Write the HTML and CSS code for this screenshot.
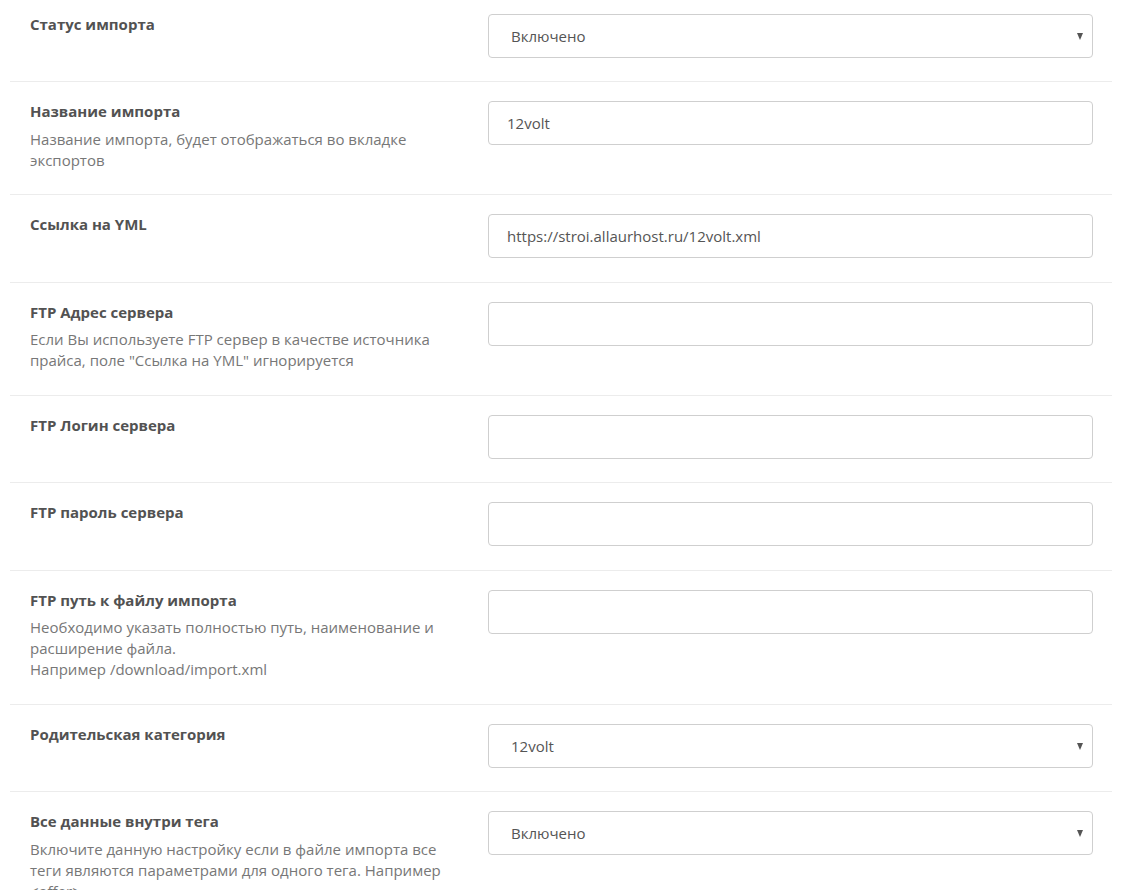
FILE: index.html
```html
<!DOCTYPE html>
<html lang="ru">
<head>
<meta charset="utf-8">
<title>Импорт</title>
<link rel="stylesheet" href="styles.css">
</head>
<body>
<div class="form">
  <div class="row">
    <div class="info"><div class="label">Статус импорта</div></div>
    <div class="control select-wrap"><select class="field"><option>Включено</option></select></div>
  </div>
  <div class="row">
    <div class="info"><div class="label">Название импорта</div><div class="desc">Название импорта, будет отображаться во вкладке экспортов</div></div>
    <div class="control"><input class="field" type="text" value="12volt"></div>
  </div>
  <div class="row">
    <div class="info"><div class="label">Ссылка на YML</div></div>
    <div class="control"><input class="field" type="text" value="https://stroi.allaurhost.ru/12volt.xml"></div>
  </div>
  <div class="row">
    <div class="info"><div class="label">FTP Адрес сервера</div><div class="desc">Если Вы используете FTP сервер в качестве источника прайса, поле "Ссылка на YML" игнорируется</div></div>
    <div class="control"><input class="field" type="text" value=""></div>
  </div>
  <div class="row">
    <div class="info"><div class="label">FTP Логин сервера</div></div>
    <div class="control"><input class="field" type="text" value=""></div>
  </div>
  <div class="row">
    <div class="info"><div class="label">FTP пароль сервера</div></div>
    <div class="control"><input class="field" type="text" value=""></div>
  </div>
  <div class="row">
    <div class="info"><div class="label">FTP путь к файлу импорта</div><div class="desc">Необходимо указать полностью путь, наименование и расширение файла.<br>Например /download/import.xml</div></div>
    <div class="control"><input class="field" type="text" value=""></div>
  </div>
  <div class="row">
    <div class="info"><div class="label">Родительская категория</div></div>
    <div class="control select-wrap"><select class="field"><option>12volt</option></select></div>
  </div>
  <div class="row">
    <div class="info"><div class="label">Все данные внутри тега</div><div class="desc">Включите данную настройку если в файле импорта все теги являются параметрами для одного тега. Например &lt;offer&gt;</div></div>
    <div class="control select-wrap"><select class="field"><option>Включено</option></select></div>
  </div>
</div>
</body>
</html>
```
FILE: styles.css
```css
html, body {
  margin: 0;
  padding: 0;
  background: #fff;
}
body {
  font-family: "Open Sans", "Liberation Sans", sans-serif;
  font-size: 15px;
  color: #555;
  overflow: hidden;
}
.form {
  margin: -5.5px 0 0 10px;
  width: 1102px;
}
.row {
  display: grid;
  grid-template-columns: 440px 605px;
  column-gap: 18px;
  padding: 19px 19px 23.5px 20px;
  border-bottom: 1px solid #ececec;
}
.label {
  font-weight: 700;
  font-size: 15px;
  line-height: 20px;
  color: #525252;
}
.desc {
  margin-top: 7.5px;
  line-height: 21px;
  color: #777;
  font-size: 15px;
}
.control {
  position: relative;
}
.field {
  display: block;
  box-sizing: border-box;
  width: 605px;
  height: 44px;
  margin: 0;
  padding: 0 18px;
  border: 1px solid #cfcfcf;
  border-radius: 4px;
  background: #fff;
  font-family: "Open Sans", "Liberation Sans", sans-serif;
  font-size: 15px;
  color: #555;
  outline: none;
}
select.field {
  -webkit-appearance: none;
  appearance: none;
  padding-left: 22px;
}
.select-wrap::after {
  content: "";
  position: absolute;
  right: 10px;
  top: 19px;
  width: 0;
  height: 0;
  border-left: 3.5px solid transparent;
  border-right: 3.5px solid transparent;
  border-top: 7px solid #555;
  pointer-events: none;
}
```
